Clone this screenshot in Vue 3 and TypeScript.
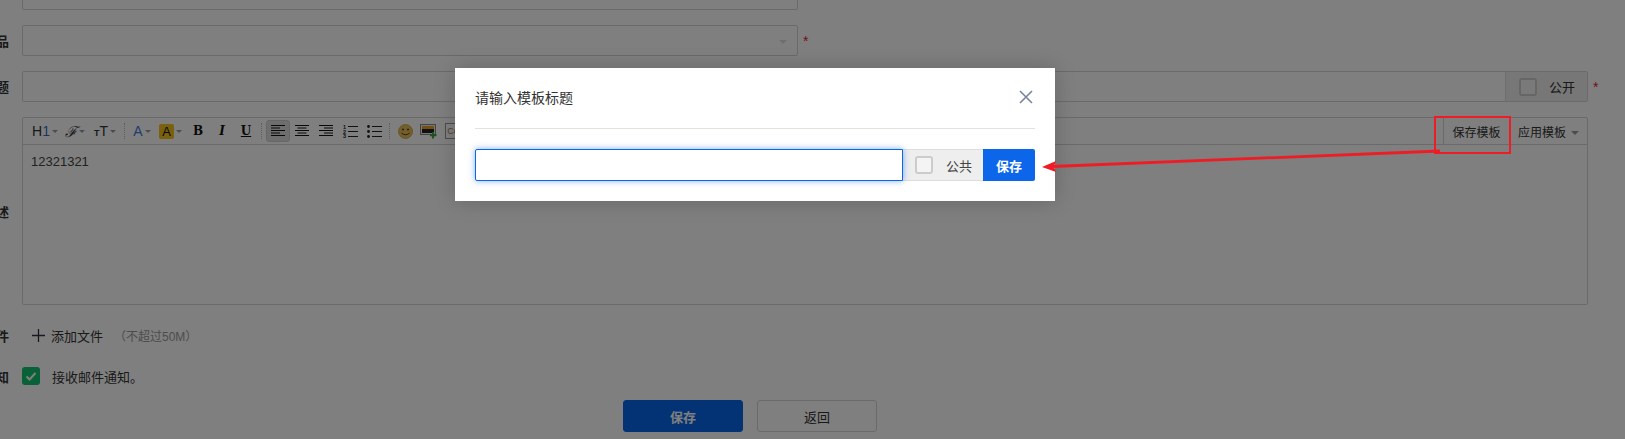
<script setup lang="ts">
const alignments = [
  { id: 'left', active: true, lines: [[0, 14], [0, 9], [0, 14], [0, 9], [0, 14]] },
  { id: 'center', active: false, lines: [[0, 14], [2.5, 11.5], [0, 14], [2.5, 11.5], [0, 14]] },
  { id: 'right', active: false, lines: [[0, 14], [5, 14], [0, 14], [5, 14], [0, 14]] },
]
</script>

<template>
  <div class="page">
    <main class="form">
      <div class="row first"><div class="input short"></div></div>
      <div class="row gap15">
        <span class="label">产品</span>
        <div class="input short select"><i class="select-caret"></i></div>
        <span class="star">*</span>
      </div>
      <div class="row gap15">
        <span class="label">标题</span>
        <div class="input wide">
          <div class="addon"><i class="check grey"></i><span>公开</span></div>
        </div>
        <span class="star">*</span>
      </div>
      <div class="row gap15 top">
        <span class="label desc">描述</span>
        <section class="editor">
          <div class="toolbar">
            <span class="tool t-h"><b class="h">H<em>1</em></b><i class="caret"></i></span>
            <span class="tool t-f"><b class="f">ℱ</b><i class="caret"></i></span>
            <span class="tool t-t"><b class="tt"><small>T</small>T</b><i class="caret"></i></span>
            <i class="sep"></i>
            <span class="tool t-a"><b class="fc">A</b><i class="caret"></i></span>
            <span class="tool t-b"><b class="bc">A</b><i class="caret"></i></span>
            <span class="tool"><b class="fmt">B</b></span>
            <span class="tool"><b class="fmt it">I</b></span>
            <span class="tool"><b class="fmt un">U</b></span>
            <i class="sep"></i>
            <span v-for="a in alignments" :key="a.id" class="tool" :class="{ on: a.active }">
              <svg width="14" height="12" viewBox="0 0 14 12">
                <path v-for="(l, n) in a.lines" :key="n" :d="`M${l[0]} ${n * 2.5 + 0.5}H${l[1]}`" stroke="#111" stroke-width="1" />
              </svg>
            </span>
            <span class="tool">
              <svg width="15" height="14" viewBox="0 0 15 14">
                <path d="M5 2.500H15M5 7.500H15M5 12.500H15" stroke="#222" />
                <text x="0" y="4.500" class="num">1</text><text x="0" y="9.500" class="num">2</text><text x="0" y="14" class="num">3</text>
              </svg>
            </span>
            <span class="tool">
              <svg width="15" height="14" viewBox="0 0 15 14">
                <path d="M5 2.500H15M5 7.500H15M5 12.500H15" stroke="#222" />
                <circle cx="1.500" cy="2.500" r="1.400" fill="#222" /><circle cx="1.500" cy="7.500" r="1.400" fill="#222" /><circle cx="1.500" cy="12.500" r="1.400" fill="#222" />
              </svg>
            </span>
            <i class="sep last"></i>
            <span class="tool">
              <svg width="15" height="15" viewBox="0 0 15 15">
                <circle cx="7.500" cy="7.500" r="7" fill="#e9bd58" stroke="#c99a3a" stroke-width=".8" />
                <circle cx="5" cy="5.500" r="1" fill="#4c3a10" /><circle cx="10" cy="5.500" r="1" fill="#4c3a10" />
                <path d="M3.500 9Q7.500 12.500 11.500 9" fill="none" stroke="#4c3a10" />
              </svg>
            </span>
            <span class="tool">
              <svg width="18" height="15" viewBox="0 0 18 15">
                <rect x=".5" y=".5" width="15" height="10" fill="#eee" stroke="#888" />
                <rect x="2" y="2" width="12" height="7" fill="#222" />
                <rect x="2" y="2" width="12" height="3" fill="#e8a020" />
                <path d="M13 8V14.500M10 11.200H16.500" stroke="#3aa33a" stroke-width="2" />
              </svg>
            </span>
            <span class="tool"><i class="code">Co</i></span>
            <div class="templates">
              <button class="tpl save-tpl">保存模板</button>
              <button class="tpl">应用模板<i class="caret big"></i></button>
            </div>
          </div>
          <div class="body">12321321</div>
        </section>
      </div>
      <div class="row attach">
        <span class="label">附件</span>
        <svg class="plus" width="13" height="13" viewBox="0 0 13 13"><path d="M6.500 0V13M0 6.500H13" stroke="#334" stroke-width="1.300" /></svg>
        <span class="text">添加文件</span>
        <span class="hint">（不超过50M）</span>
      </div>
      <div class="row notify">
        <span class="label">通知</span>
        <i class="check green">
          <svg width="18" height="18" viewBox="0 0 18 18"><path d="M4.500 9.500L7.500 12.500L13.500 6" fill="none" stroke="#fff" stroke-width="2" /></svg>
        </i>
        <span class="text">接收邮件通知。</span>
      </div>
      <div class="actions">
        <button class="btn primary">保存</button>
        <button class="btn">返回</button>
      </div>
    </main>

    <div class="overlay"></div>

    <div class="modal">
      <header class="modal-head">
        <h2>请输入模板标题</h2>
        <svg width="16" height="16" viewBox="0 0 16 16"><path d="M2 2L14 14M14 2L2 14" stroke="#7a8499" stroke-width="1.600" /></svg>
      </header>
      <div class="modal-body">
        <input class="title-input" type="text" />
        <div class="public"><i class="check light"></i><span>公共</span></div>
        <button class="modal-save">保存</button>
      </div>
    </div>

    <svg class="annotation" width="1625" height="439" viewBox="0 0 1625 439">
      <rect x="1435" y="117" width="75" height="36" fill="none" stroke="#ee1c25" stroke-width="2" />
      <path d="M1440 151L1052 166.500" stroke="#ee1c25" stroke-width="2.800" fill="none" />
      <path d="M1042 167L1056 161L1054 166.500L1056 172Z" fill="#ee1c25" />
    </svg>
  </div>
</template>

<style>
html, body { margin: 0; background: #fff; }
</style>

<style scoped>
.page {
  position: relative;
  width: 1625px;
  height: 439px;
  overflow: hidden;
  background: #fff;
  color: #333;
  font: 13px "Liberation Sans", "Noto Sans CJK SC", sans-serif;
}
.form { display: flex; flex-direction: column; padding-left: 22px; }
.row { display: flex; align-items: center; position: relative; }
.first { margin-top: -21px; }
.gap15 { margin-top: 15px; }
.top { align-items: flex-start; }
.label {
  position: absolute;
  right: calc(100% + 13px);
  white-space: nowrap;
  font-weight: 700;
  color: #333;
}
.desc { top: 85px; }
.input {
  box-sizing: border-box;
  height: 31px;
  border: 1px solid #d4d4d4;
  border-radius: 2px;
  background: #fff;
  display: flex;
  justify-content: flex-end;
}
.short { width: 776px; }
.wide { width: 1566px; }
.select { position: relative; }
.select-caret {
  position: absolute;
  right: 10px;
  top: 14px;
  border: 4px solid transparent;
  border-top-color: #ddd;
  border-bottom: 0;
}
.star { margin-left: 5px; color: #e0242e; font-size: 14px; line-height: 14px; }
.addon {
  width: 82px;
  display: flex;
  align-items: center;
  gap: 12px;
  padding-left: 13px;
  box-sizing: border-box;
  background: #eee;
  border-left: 1px solid #ddd;
}
.check {
  display: block;
  box-sizing: border-box;
  width: 18px;
  height: 18px;
  border-radius: 3px;
  flex: none;
}
.check.grey, .check.light { border: 2px solid #ccc; background: #f4f4f4; }
.green { background: #13c26f; }
.green svg { display: block; }
.editor {
  box-sizing: border-box;
  width: 1566px;
  height: 188px;
  border: 1px solid #d4d4d4;
  border-radius: 2px;
}
.toolbar {
  height: 26px;
  display: flex;
  align-items: center;
  padding-left: 6px;
  border-bottom: 1px solid #d4d4d4;
  position: relative;
}
.tool {
  width: 24px;
  height: 22px;
  flex: none;
  display: flex;
  align-items: center;
  justify-content: center;
  border-radius: 3px;
  box-sizing: border-box;
}
.tool.on { background: #ddd; border: 1px solid #ccc; }
.t-h { width: 32px; }
.t-f { width: 28px; }
.t-t { width: 32px; }
.t-a { width: 26px; }
.t-b { width: 31px; }
.tool b { font-weight: 400; }
.h { font-size: 14px; color: #333; }
.h em { font-style: normal; color: #3a6bc9; }
.f { font: italic 15px "DejaVu Serif", serif; color: #333; }
.tt { font-size: 14px; color: #333; }
.tt small { font-size: 9px; font-weight: 700; }
.fc { font-size: 14px; color: #3f78e0; }
.bc { width: 15px; height: 15px; line-height: 15px; text-align: center; font-size: 13px; color: #111; background: #f3c21c; border-radius: 2px; }
.tool b.fmt { font: 700 12px "DejaVu Serif", serif; color: #111; }
.tool b.it { font-style: italic; }
.tool b.un { text-decoration: underline; }
.caret {
  display: block;
  margin-left: 2px;
  border: 3px solid transparent;
  border-top: 3px solid #999;
  border-bottom: 0;
}
.caret.big { display: inline-block; margin-left: 5px; border-width: 4px 4px 0; vertical-align: 2px; }
.sep { display: block; flex: none; width: 0; height: 16px; margin: 0 4px 0 3px; border-left: 1px dotted #bbb; }
.sep.last { margin-right: 3px; }
.num { font-size: 5.500px; font-weight: 700; fill: #222; }
.code { font: normal 9px "Liberation Sans", sans-serif; color: #a08060; border: 1px solid #999; padding: 2px 1px; }
.templates { margin-left: auto; display: flex; align-self: stretch; }
.tpl {
  padding: 0;
  border: 0;
  background: none;
  font: inherit;
  font-size: 12px;
  color: #333;
}
.save-tpl { width: 66px; border-left: 1px solid #d4d4d4; margin-right: 9px; }
.templates .tpl:last-child { width: 69px; text-align: left; }
.body { padding: 9px 8px; font-size: 13px; line-height: 15px; color: #444; }
.attach { margin-top: 22px; height: 16px; }
.plus { margin-left: 10px; }
.text { margin-left: 6px; }
.hint { margin-left: 11px; color: #999; font-size: 12px; }
.notify { margin-top: 24px; height: 18px; }
.notify .text { margin-left: 12px; }
.actions { display: flex; gap: 14px; margin: 15px 0 0 601px; }
.btn {
  box-sizing: border-box;
  width: 120px;
  height: 32px;
  border: 1px solid #d4d4d4;
  border-radius: 3px;
  background: #fff;
  font: inherit;
  font-size: 13px;
  color: #333;
}
.btn.primary { background: #0666ea; border-color: #0666ea; color: #fff; font-weight: 700; }
.overlay { position: absolute; inset: 0; background: rgba(0, 0, 0, .5); }
.modal {
  position: absolute;
  left: 455px;
  top: 68px;
  width: 600px;
  height: 133px;
  box-sizing: border-box;
  padding: 0 20px;
  background: #fff;
  box-shadow: 0 0 20px rgba(0, 0, 0, .2);
}
.modal-head {
  height: 60px;
  border-bottom: 1px solid #e2e2e2;
  display: flex;
  align-items: center;
  justify-content: space-between;
}
.modal-head h2 { margin: -3px 0 0; font-size: 14px; font-weight: 400; color: #333; }
.modal-head svg { margin: -3px 1px 0 0; }
.modal-body { display: flex; margin-top: 20px; height: 32px; }
.title-input {
  box-sizing: border-box;
  width: 428px;
  height: 32px;
  border: 1px solid #0b66ea;
  border-radius: 2px 0 0 2px;
  outline: 0;
  box-shadow: 0 0 6px rgba(11, 102, 234, .5);
  position: relative;
}
.public {
  flex: 1;
  display: flex;
  align-items: center;
  gap: 13px;
  padding-left: 12px;
  box-sizing: border-box;
  background: #eee;
  border: solid #ddd;
  border-width: 1px 0;
  color: #444;
}
.modal-save {
  width: 52px;
  border: 0;
  border-radius: 0 2px 2px 0;
  background: #0b66ea;
  color: #fff;
  font: inherit;
  font-weight: 700;
}
.annotation { position: absolute; left: 0; top: 0; }
</style>
